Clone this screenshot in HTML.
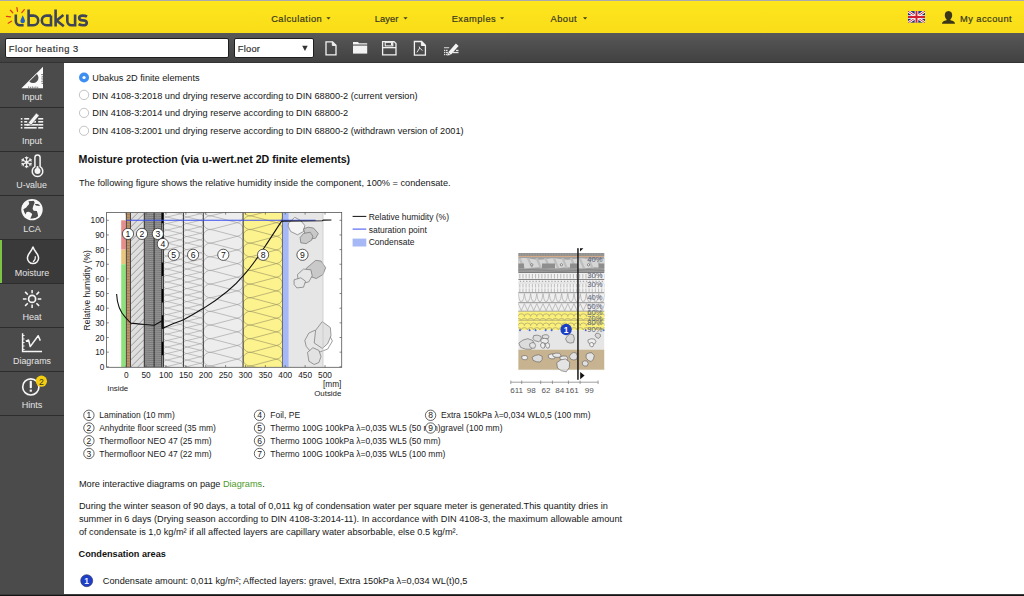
<!DOCTYPE html>
<html><head><meta charset="utf-8">
<style>
html,body{margin:0;padding:0;width:1024px;height:596px;overflow:hidden;background:#fff;font-family:"Liberation Sans",sans-serif;}
.a{position:absolute;}
#top{left:0;top:0;width:1024px;height:1.1px;background:#a8aab0;}
#hdr{left:0;top:1.1px;width:1024px;height:32.1px;background:linear-gradient(#fde61e,#f9dd18);}
#tb{left:0;top:33.2px;width:1024px;height:29px;background:linear-gradient(#585858,#414141);}
#tbline{left:0;top:62px;width:1024px;height:1px;background:#333;}
#side{left:0;top:63px;width:64px;height:533px;background:#4b4b4b;}
#bot{left:0;top:594px;width:1024px;height:2px;background:linear-gradient(#666,#1a1a1a 45%,#111);}
.nav{font-size:10px;color:#3b3a22;line-height:10px;}
.sep{left:0;width:64px;height:1.5px;background:#2d2d2d;}

</style></head>
<body>
<div class="a" id="top"></div>
<div class="a" id="hdr"></div>
<div class="a" id="tb"></div>
<div class="a" id="tbline"></div>
<div class="a" id="side"></div>
<div class="a" id="bot"></div>

<!-- header -->
<svg class="a" style="left:0;top:0" width="100" height="33" viewBox="0 0 100 33">
  <g stroke="#dc3c1a" stroke-width="1.25" stroke-linecap="round">
    <path d="M16.9 7.6 L17.5 11.4"/>
    <path d="M10.4 10.3 L12.8 12.8"/>
    <path d="M24.3 9.6 L21.8 12.6"/>
    <path d="M6.4 16.3 L10.6 16.8"/>
    <path d="M8.2 23.2 L11.4 21.2"/>
  </g>
  <g fill="none" stroke="#3f4557" stroke-width="2.6">
    <path d="M15.8 14.6 V21 A4.2 4.2 0 0 0 20 25.2 H23.6"/>
    <path d="M28.6 9.4 V25.2 H33.4 A4.8 4.8 0 0 0 33.4 15.6 H28.6"/>
    <path d="M51 15.6 V26.5 M51 25.2 H46.6 A4.8 4.8 0 0 1 46.6 15.6 H51"/>
    <path d="M55.6 9.4 V26.5 M63.4 14.9 L56.6 20.5 L63.8 26.3"/>
    <path d="M67.3 14.6 V21 A4.2 4.2 0 0 0 71.5 25.2 H75.1 M75.1 14.6 V26.5"/>
    <path d="M87 16.6 Q85.6 15.6 82.6 15.6 Q79.2 15.6 79.2 18 Q79.2 20.3 82.8 20.4 Q86.8 20.5 86.8 22.9 Q86.8 25.2 83 25.2 Q80.2 25.2 78.6 24.2"/>
  </g>
  <path d="M22.7 15.3 Q21 19 20.5 20.6 Q20.2 23.3 22.6 23.3 Q25.1 23.3 24.9 20.6 Q24.6 19 22.7 15.3Z" fill="#1c5fd0"/>
</svg>

<svg class="a" style="left:0;top:0" width="1024" height="63" viewBox="0 0 1024 63">
  <g font-family="Liberation Sans" font-size="9.3" fill="#3a3920" stroke="#3a3920" stroke-width="0.2" letter-spacing="0.45">
    <text x="271.2" y="21.5">Calculation</text>
    <text x="374.8" y="21.5" letter-spacing="0.1">Layer</text>
    <text x="451.7" y="21.5">Examples</text>
    <text x="550.5" y="21.5">About</text>
    <text x="960" y="21.8">My account</text>
  </g>
  <g fill="#3d3c22">
    <path d="M326.4 17.2h4.2l-2.1 2.4z"/>
    <path d="M403.4 17.2h4.2l-2.1 2.4z"/>
    <path d="M500 17.2h4.2l-2.1 2.4z"/>
    <path d="M583 17.2h4.2l-2.1 2.4z"/>
  </g>
</svg>


<!-- flag & user -->
<svg class="a" style="left:900px;top:5px" width="70" height="25" viewBox="900 5 70 25">
  <defs><clipPath id="flc"><rect x="908" y="11.1" width="17" height="11.7"/></clipPath></defs>
  <g clip-path="url(#flc)">
    <rect x="908" y="11.1" width="17" height="11.7" fill="#22307a"/>
    <path d="M908 11.1 L925 22.8 M925 11.1 L908 22.8" stroke="#fff" stroke-width="2.6"/>
    <path d="M908 11.1 L925 22.8 M925 11.1 L908 22.8" stroke="#d02030" stroke-width="0.9"/>
    <path d="M916.5 11.1 V22.8 M908 16.95 H925" stroke="#fff" stroke-width="3.6"/>
    <path d="M916.5 11.1 V22.8 M908 16.95 H925" stroke="#d02030" stroke-width="2"/>
  </g>
  <path d="M948.5 11 C945.8 11 944.8 13.2 944.8 15.3 C944.8 17.3 945.8 18.8 946.6 19.4 L946.6 20.3 C943.6 20.9 942 21.9 942 23.8 H955 C955 21.9 953.4 20.9 950.4 20.3 L950.4 19.4 C951.2 18.8 952.2 17.3 952.2 15.3 C952.2 13.2 951.2 11 948.5 11Z" fill="#3a3618"/>
</svg>
<!-- toolbar -->
<div class="a" style="left:5px;top:38px;width:224px;height:20px;background:#fff;border:1px solid #1e1e1e;border-radius:2px;box-sizing:border-box;"></div>
<div class="a" style="left:234px;top:38px;width:79.5px;height:20px;background:#fff;border:1px solid #1e1e1e;border-radius:2px;box-sizing:border-box;"></div>
<svg class="a" style="left:0;top:33px" width="480" height="30" viewBox="0 33 480 30">
  <g font-family="Liberation Sans" fill="#333" stroke="#333" stroke-width="0.2">
    <text x="8.8" y="51.9" font-size="9.3" letter-spacing="0.52">Floor heating 3</text>
    <text x="237.7" y="51.8" font-size="9.3" letter-spacing="0.27">Floor</text>
  </g>
  <path d="M302.2 45.7 H307.7 L304.95 51.1Z" fill="#333"/>
  <!-- new doc -->
  <path d="M326 41.8 H332.5 L336 45.3 V54.8 H326Z" fill="none" stroke="#f2f2f2" stroke-width="1.3"/>
  <path d="M332.3 41.8 V45.4 H336" fill="#f2f2f2" stroke="#f2f2f2" stroke-width="1"/>
  <!-- folder -->
  <path d="M353 42 H358 L359 43.2 H367.2 V44.6 H353Z" fill="#f2f2f2"/>
  <rect x="353" y="45.6" width="14.2" height="8" fill="#f2f2f2"/>
  <!-- save -->
  <path d="M382.6 41.6 H394 L396 43.6 V54.9 H382.6Z" fill="none" stroke="#f2f2f2" stroke-width="1.3"/>
  <rect x="385.2" y="42.3" width="7.6" height="3.6" fill="none" stroke="#f2f2f2" stroke-width="1.1"/>
  <rect x="391" y="42.6" width="1.6" height="2.6" fill="#f2f2f2"/>
  <rect x="382.6" y="47" width="13.4" height="1.3" fill="#f2f2f2"/>
  <!-- pdf -->
  <path d="M414.4 41.5 H421.6 L425.4 45.3 V55.2 H414.4Z" fill="none" stroke="#f2f2f2" stroke-width="1.3"/>
  <path d="M421.4 41.5 V45.5 H425.4" fill="#f2f2f2" stroke="#f2f2f2" stroke-width="1"/>
  <path d="M416.9 52.4 L419.7 48 L419.2 46.6 M419.7 48 L422.5 50.6" fill="none" stroke="#f2f2f2" stroke-width="0.9"/>
  <!-- edit -->
  <g fill="#e6e6e6">
    <rect x="444" y="47" width="5.2" height="1.3" fill="#bdbdbd"/>
    <rect x="444" y="49.8" width="1.3" height="1.3"/><rect x="446" y="49.8" width="1.6" height="1.3"/><rect x="456" y="49.8" width="2.5" height="1.3"/>
    <rect x="444" y="51.9" width="1.3" height="1.3"/><rect x="446" y="51.9" width="1.9" height="1.3"/><rect x="452.6" y="51.9" width="5.9" height="1.3"/>
    <rect x="444" y="54" width="1.3" height="1.2"/><rect x="446" y="54" width="0.9" height="1.2"/>
  </g>
  <path d="M448.2 52.3 L455.9 43.6 L458.6 46 L450.9 54.7Z" fill="#f4f4f4"/>
  <path d="M447.9 52.8 L447 55.5 L450.4 55.1Z" fill="#f4f4f4"/>
</svg>

<!-- sidebar -->
<div class="a" style="left:0;top:239.5px;width:64px;height:44px;background:#3a3a3a;"></div>
<div class="a" style="left:0;top:239.5px;width:2px;height:44px;background:#7cc443;"></div>
<div class="a sep" style="top:106.5px"></div>
<div class="a sep" style="top:150.5px"></div>
<div class="a sep" style="top:194.5px"></div>
<div class="a sep" style="top:238.7px"></div>
<div class="a sep" style="top:282.7px"></div>
<div class="a sep" style="top:326.7px"></div>
<div class="a sep" style="top:370.7px"></div>
<div class="a sep" style="top:414.7px"></div>
<svg class="a" style="left:0;top:63px" width="64" height="360" viewBox="0 63 64 360">
  <g font-family="Liberation Sans" font-size="9.1" fill="#e4e4e4" text-anchor="middle">
    <text x="32" y="99.5">Input</text>
    <text x="32" y="143.5">Input</text>
    <text x="31.6" y="187.5" font-size="8.9">U-value</text>
    <text x="32" y="231.5">LCA</text>
    <text x="32" y="275.5" font-size="8.96">Moisture</text>
    <text x="32" y="319.5">Heat</text>
    <text x="32" y="363.5" font-size="8.9">Diagrams</text>
    <text x="32" y="407.5">Hints</text>
  </g>
  <!-- set square -->
  <path d="M21.4 88.2 L43 66.7 V88.2Z" fill="#fafafa"/>
  <path d="M29.3 81.5 A5.35 5.35 0 0 0 36.9 73.9Z" fill="#4f4f4f"/>
  <g stroke="#4f4f4f" stroke-width="0.7">
    <path d="M41.2 74.5 H43 M41.6 76.3 H43 M41.2 78.1 H43 M41.6 79.9 H43 M41.2 81.7 H43 M41.6 83.5 H43"/>
    <path d="M28.7 86.4 V88.2 M30.5 86.8 V88.2 M32.3 86.4 V88.2 M34.1 86.8 V88.2 M35.9 86.4 V88.2 M37.7 86.8 V88.2"/>
  </g>
  <!-- input 2 -->
  <g fill="#f0f0f0">
    <rect x="20.8" y="118" width="1.6" height="1.6"/><rect x="24.2" y="118" width="5" height="1.6"/><rect x="38.2" y="118" width="5" height="1.6"/>
    <rect x="20.8" y="121" width="1.6" height="1.6"/><rect x="24.2" y="121" width="3" height="1.6"/><rect x="31" y="121" width="5" height="1.6"/><rect x="38.2" y="121" width="5" height="1.6"/>
    <rect x="20.8" y="124" width="1.6" height="1.6"/><rect x="24.2" y="124" width="14" height="1.6"/><rect x="38.2" y="124" width="5" height="1.6"/>
    <rect x="20.8" y="127" width="1.6" height="1.6"/><rect x="24.2" y="127" width="12.5" height="1.6"/><rect x="38.2" y="127" width="5" height="1.6"/>
  </g>
  <path d="M28.2 122.8 L36.3 113 L39.2 115.5 L31.1 125.2Z" fill="#f4f4f4" stroke="#4f4f4f" stroke-width="0.6"/>
  <path d="M27.8 123.3 L26.5 125.9 L29.6 125Z" fill="#f4f4f4"/>
  <!-- snowflake -->
  <path d="M26.60 162.20L26.60 156.80M26.60 158.85L28.01 157.44M26.60 158.85L25.19 157.44M26.60 162.20L21.92 159.50M23.70 160.53L23.18 158.59M23.70 160.53L21.77 161.04M26.60 162.20L21.92 164.90M23.70 163.87L21.77 163.36M23.70 163.87L23.18 165.81M26.60 162.20L26.60 167.60M26.60 165.55L25.19 166.96M26.60 165.55L28.01 166.96M26.60 162.20L31.28 164.90M29.50 163.87L30.02 165.81M29.50 163.87L31.43 163.36M26.60 162.20L31.28 159.50M29.50 160.53L31.43 161.04M29.50 160.53L30.02 158.59" stroke="#f0f0f0" stroke-width="1.05" fill="none" stroke-linecap="round"/>
  <circle cx="26.6" cy="162.2" r="1.7" fill="#f0f0f0"/>
  <!-- thermometer -->
  <path d="M34.9 166.6 V157.6 A2.6 2.6 0 0 1 40.1 157.6 V166.6 A5.3 5.3 0 1 1 34.9 166.6Z" fill="none" stroke="#f4f4f4" stroke-width="1.5"/>
  <circle cx="37.5" cy="171" r="3" fill="#f4f4f4"/>
  <path d="M36.5 171 V167 A1 1 0 0 1 38.5 167 V171Z" fill="#f4f4f4"/>
  <!-- globe -->
  <defs><clipPath id="gclip"><circle cx="32" cy="209.6" r="9.35"/></clipPath></defs>
  <circle cx="32" cy="209.6" r="10.7" fill="#f8f8f8"/>
  <g clip-path="url(#gclip)" fill="#4b4b4b">
    <polygon points="28.39,201.20 33.85,200.78 34.69,202.87 33.85,204.55 33.01,206.65 32.59,208.75 33.64,210.85 36.79,211.06 37.62,213.37 38.04,215.88 36.79,217.56 33.43,218.40 30.07,218.82 30.91,217.14 32.17,214.62 31.33,212.95 28.81,211.69 26.71,212.11 25.46,214.62 24.20,212.11 23.36,209.17 25.04,208.33 26.29,207.49 27.34,206.02 28.81,204.55 29.23,203.29"/>
    <polygon points="34.69,203.92 37.62,203.92 39.93,204.97 39.30,206.02 35.95,205.39"/>
  </g>
  <!-- droplet -->
  <path d="M33 246.6 Q33.5 249 36.5 253 Q38.6 256 38.6 258 A5.6 5.6 0 0 1 27.4 258 Q27.4 256 29.5 253 Q32.5 249 33 246.6Z" fill="none" stroke="#f4f4f4" stroke-width="1.5"/>
  <path d="M35.3 256.6 Q35.6 260.2 33.4 261.6" fill="none" stroke="#f4f4f4" stroke-width="1.2" stroke-linecap="round"/>
  <!-- sun -->
  <circle cx="32.1" cy="298.9" r="3.5" fill="none" stroke="#f6f6f6" stroke-width="1.7"/>
  <g stroke="#f6f6f6" stroke-width="1.5">
    <path d="M32.1 289.9 V293.3 M32.1 304.6 V308 M22.9 298.9 H26.5 M37.7 298.9 H41.3"/>
    <path d="M25.1 291.9 L27.8 294.6 M36.4 303.2 L39.1 305.9 M25.1 305.9 L27.8 303.2 M36.4 294.6 L39.1 291.9"/>
  </g>
  <!-- diagrams -->
  <path d="M22.6 333.3 V351.6 H42" fill="none" stroke="#f6f6f6" stroke-width="1.5"/>
  <g stroke="#f6f6f6" stroke-width="0.9"><path d="M22.6 335.5 H24.6 M22.6 339 H24.6 M22.6 342.5 H24.6 M22.6 346 H24.6 M22.6 349.5 H24.6"/></g>
  <path d="M25.8 341.3 L28.6 340 L30.2 346.6 L38.2 335.7 L40.3 340.6" fill="none" stroke="#f6f6f6" stroke-width="1.5" stroke-linejoin="round"/>
  <!-- hints -->
  <circle cx="30.8" cy="386.9" r="8.1" fill="none" stroke="#f6f6f6" stroke-width="1.65"/>
  <rect x="29.7" y="380.8" width="2.2" height="7.4" rx="0.8" fill="#f6f6f6"/>
  <rect x="29.7" y="389.6" width="2.2" height="2.1" fill="#f6f6f6"/>
  <circle cx="41.4" cy="381.2" r="5.6" fill="#f5cf0f"/>
  <text x="41.4" y="384.6" font-family="Liberation Sans" font-size="8.6" fill="#333" text-anchor="middle">2</text>
</svg>

<!-- content texts -->
<svg class="a" style="left:64px;top:63px" width="960" height="531" viewBox="64 63 960 531">
  <!-- radios -->
  <circle cx="84.05" cy="77.5" r="5" fill="#3d8ef2"/>
  <circle cx="84.05" cy="77.5" r="1.6" fill="#fff"/>
  <circle cx="84.05" cy="94.9" r="4.7" fill="#fff" stroke="#b4b4b4" stroke-width="0.8"/>
  <circle cx="84.05" cy="112.9" r="4.6" fill="#fff" stroke="#b4b4b4" stroke-width="0.8"/>
  <circle cx="84.05" cy="130.8" r="4.6" fill="#fff" stroke="#b4b4b4" stroke-width="0.8"/>
  <g font-family="Liberation Sans" font-size="9.2" fill="#161616">
    <text x="92.3" y="80.8">Ubakus 2D finite elements</text>
    <text x="92.3" y="98.5">DIN 4108-3:2018 und drying reserve according to DIN 68800-2 (current version)</text>
    <text x="92.3" y="116.2">DIN 4108-3:2014 und drying reserve according to DIN 68800-2</text>
    <text x="92.3" y="134">DIN 4108-3:2001 und drying reserve according to DIN 68800-2 (withdrawn version of 2001)</text>
    <text x="78.6" y="162.8" font-weight="bold" font-size="10.63" fill="#111">Moisture protection (via u-wert.net 2D finite elements)</text>
    <text x="79" y="185.9">The following figure shows the relative humidity inside the component, 100% = condensate.</text>
    <text x="78.9" y="487.3">More interactive diagrams on page <tspan fill="#4c9a2a">Diagrams</tspan>.</text>
    <text x="78.9" y="509.3">During the winter season of 90 days, a total of 0,011 kg of condensation water per square meter is generated.This quantity dries in</text>
    <text x="78.9" y="522">summer in 6 days (Drying season according to DIN 4108-3:2014-11). In accordance with DIN 4108-3, the maximum allowable amount</text>
    <text x="78.9" y="534.7">of condensate is 1,0 kg/m² if all affected layers are capillary water absorbable, else 0.5 kg/m².</text>
    <text x="78.6" y="556.5" font-weight="bold" font-size="9.15" fill="#111">Condensation areas</text>
    <text x="102.8" y="583.6">Condensate amount: 0,011 kg/m²; Affected layers: gravel, Extra 150kPa λ=0,034 WL(t)0,5</text>
  </g>
  <circle cx="86.7" cy="580.7" r="6" fill="#1e3ec8" stroke="#2a2a50" stroke-width="0.6"/>
  <text x="86.7" y="583.8" font-family="Liberation Sans" font-size="8.5" font-weight="bold" fill="#e8ecff" text-anchor="middle">1</text>

  <!-- legend list -->
  <g fill="#fff" stroke="#333" stroke-width="0.75">
    <circle cx="88.9" cy="415.3" r="5.2"/><circle cx="88.9" cy="428" r="5.2"/><circle cx="88.9" cy="440.8" r="5.2"/><circle cx="88.9" cy="453.5" r="5.2"/>
    <circle cx="259.5" cy="415.3" r="5.2"/><circle cx="259.5" cy="428" r="5.2"/><circle cx="259.5" cy="440.8" r="5.2"/><circle cx="259.5" cy="453.5" r="5.2"/>
  </g>
  <g font-family="Liberation Sans" font-size="8.5" fill="#222">
    <g text-anchor="middle">
      <text x="88.9" y="418.3">1</text><text x="88.9" y="431">2</text><text x="88.9" y="443.8">2</text><text x="88.9" y="456.5">3</text>
      <text x="259.5" y="418.3">4</text><text x="259.5" y="431">5</text><text x="259.5" y="443.8">6</text><text x="259.5" y="456.5">7</text>
    </g>
    <text x="99.2" y="418.3">Lamination (10 mm)</text>
    <text x="99.2" y="431">Anhydrite floor screed (35 mm)</text>
    <text x="99.2" y="443.8">Thermofloor NEO 47 (25 mm)</text>
    <text x="99.2" y="456.5">Thermofloor NEO 47 (22 mm)</text>
    <text x="270.3" y="418.3">Foil, PE</text>
    <text x="270.3" y="431">Thermo 100G 100kPa λ=0,035 WL5 (50 mm)</text>
    <text x="270.3" y="443.8">Thermo 100G 100kPa λ=0,035 WL5 (50 mm)</text>
    <text x="270.3" y="456.5">Thermo 100G 100kPa λ=0,035 WL5 (100 mm)</text>
  </g>
  <g fill="#fff" stroke="#333" stroke-width="0.75">
    <circle cx="430.6" cy="415.3" r="5.2"/><circle cx="430.6" cy="428" r="5.2"/>
  </g>
  <g font-family="Liberation Sans" font-size="8.5" fill="#222">
    <text x="430.6" y="418.3" text-anchor="middle">8</text><text x="430.6" y="431" text-anchor="middle">9</text>
    <text x="441" y="418.3">Extra 150kPa λ=0,034 WL0,5 (100 mm)</text>
    <text x="440.6" y="431">gravel (100 mm)</text>
  </g>
</svg>
<!-- CHART -->
<svg class="a" style="left:70px;top:200px" width="420" height="205" viewBox="70 200 420 205">
<defs><clipPath id="cp"><rect x="106.6" y="212.4" width="235.1" height="154.9"/></clipPath></defs>
<g clip-path="url(#cp)">
<rect x="121.2" y="220.3" width="4.6" height="29.3" fill="#e88c8c"/>
<rect x="121.2" y="249.6" width="4.6" height="14.65" fill="#e9c67e"/>
<rect x="121.2" y="264.25" width="4.6" height="103.05" fill="#8ee27c"/>
<rect x="126.3" y="212.4" width="4.1" height="154.9" fill="#d8a877"/>
<path d="M126.9 212.9H129.8M126.9 214.45H129.8M126.9 216H129.8M126.9 217.55H129.8M126.9 219.1H129.8M126.9 220.65H129.8M126.9 222.2H129.8M126.9 223.75H129.8M126.9 225.3H129.8M126.9 226.85H129.8M126.9 228.4H129.8M126.9 229.95H129.8M126.9 231.5H129.8M126.9 233.05H129.8M126.9 234.6H129.8M126.9 236.15H129.8M126.9 237.7H129.8M126.9 239.25H129.8M126.9 240.8H129.8M126.9 242.35H129.8M126.9 243.9H129.8M126.9 245.45H129.8M126.9 247H129.8M126.9 248.55H129.8M126.9 250.1H129.8M126.9 251.65H129.8M126.9 253.2H129.8M126.9 254.75H129.8M126.9 256.3H129.8M126.9 257.85H129.8M126.9 259.4H129.8M126.9 260.95H129.8M126.9 262.5H129.8M126.9 264.05H129.8M126.9 265.6H129.8M126.9 267.15H129.8M126.9 268.7H129.8M126.9 270.25H129.8M126.9 271.8H129.8M126.9 273.35H129.8M126.9 274.9H129.8M126.9 276.45H129.8M126.9 278H129.8M126.9 279.55H129.8M126.9 281.1H129.8M126.9 282.65H129.8M126.9 284.2H129.8M126.9 285.75H129.8M126.9 287.3H129.8M126.9 288.85H129.8M126.9 290.4H129.8M126.9 291.95H129.8M126.9 293.5H129.8M126.9 295.05H129.8M126.9 296.6H129.8M126.9 298.15H129.8M126.9 299.7H129.8M126.9 301.25H129.8M126.9 302.8H129.8M126.9 304.35H129.8M126.9 305.9H129.8M126.9 307.45H129.8M126.9 309H129.8M126.9 310.55H129.8M126.9 312.1H129.8M126.9 313.65H129.8M126.9 315.2H129.8M126.9 316.75H129.8M126.9 318.3H129.8M126.9 319.85H129.8M126.9 321.4H129.8M126.9 322.95H129.8M126.9 324.5H129.8M126.9 326.05H129.8M126.9 327.6H129.8M126.9 329.15H129.8M126.9 330.7H129.8M126.9 332.25H129.8M126.9 333.8H129.8M126.9 335.35H129.8M126.9 336.9H129.8M126.9 338.45H129.8M126.9 340H129.8M126.9 341.55H129.8M126.9 343.1H129.8M126.9 344.65H129.8M126.9 346.2H129.8M126.9 347.75H129.8M126.9 349.3H129.8M126.9 350.85H129.8M126.9 352.4H129.8M126.9 353.95H129.8M126.9 355.5H129.8M126.9 357.05H129.8M126.9 358.6H129.8M126.9 360.15H129.8M126.9 361.7H129.8M126.9 363.25H129.8M126.9 364.8H129.8M126.9 366.35H129.8" stroke="#6e5236" stroke-width="0.5"/>
<rect x="130.4" y="212.4" width="13.9" height="154.9" fill="#dedede"/>
<g clip-path="url(#c2)"><path d="M130.4 206.3L144.3 192.4M130.4 213.3L144.3 199.4M130.4 220.3L144.3 206.4M130.4 227.3L144.3 213.4M130.4 234.3L144.3 220.4M130.4 241.3L144.3 227.4M130.4 248.3L144.3 234.4M130.4 255.3L144.3 241.4M130.4 262.3L144.3 248.4M130.4 269.3L144.3 255.4M130.4 276.3L144.3 262.4M130.4 283.3L144.3 269.4M130.4 290.3L144.3 276.4M130.4 297.3L144.3 283.4M130.4 304.3L144.3 290.4M130.4 311.3L144.3 297.4M130.4 318.3L144.3 304.4M130.4 325.3L144.3 311.4M130.4 332.3L144.3 318.4M130.4 339.3L144.3 325.4M130.4 346.3L144.3 332.4M130.4 353.3L144.3 339.4M130.4 360.3L144.3 346.4M130.4 367.3L144.3 353.4M130.4 374.3L144.3 360.4M130.4 381.3L144.3 367.4M130.4 388.3L144.3 374.4M130.4 395.3L144.3 381.4" stroke="#7c7c7c" stroke-width="0.7"/></g>
<clipPath id="c2"><rect x="130.4" y="212.4" width="13.9" height="154.9"/></clipPath>
<rect x="144.3" y="212.4" width="19.1" height="154.9" fill="#7c7c7c"/>
<path d="M144.3 213.4Q146.8 212.9 149.3 213.4T154.3 213.4T159.3 213.4T164.3 213.4M144.3 215.4Q146.8 214.9 149.3 215.4T154.3 215.4T159.3 215.4T164.3 215.4M144.3 217.4Q146.8 216.9 149.3 217.4T154.3 217.4T159.3 217.4T164.3 217.4M144.3 219.4Q146.8 218.9 149.3 219.4T154.3 219.4T159.3 219.4T164.3 219.4M144.3 221.4Q146.8 220.9 149.3 221.4T154.3 221.4T159.3 221.4T164.3 221.4M144.3 223.4Q146.8 222.9 149.3 223.4T154.3 223.4T159.3 223.4T164.3 223.4M144.3 225.4Q146.8 224.9 149.3 225.4T154.3 225.4T159.3 225.4T164.3 225.4M144.3 227.4Q146.8 226.9 149.3 227.4T154.3 227.4T159.3 227.4T164.3 227.4M144.3 229.4Q146.8 228.9 149.3 229.4T154.3 229.4T159.3 229.4T164.3 229.4M144.3 231.4Q146.8 230.9 149.3 231.4T154.3 231.4T159.3 231.4T164.3 231.4M144.3 233.4Q146.8 232.9 149.3 233.4T154.3 233.4T159.3 233.4T164.3 233.4M144.3 235.4Q146.8 234.9 149.3 235.4T154.3 235.4T159.3 235.4T164.3 235.4M144.3 237.4Q146.8 236.9 149.3 237.4T154.3 237.4T159.3 237.4T164.3 237.4M144.3 239.4Q146.8 238.9 149.3 239.4T154.3 239.4T159.3 239.4T164.3 239.4M144.3 241.4Q146.8 240.9 149.3 241.4T154.3 241.4T159.3 241.4T164.3 241.4M144.3 243.4Q146.8 242.9 149.3 243.4T154.3 243.4T159.3 243.4T164.3 243.4M144.3 245.4Q146.8 244.9 149.3 245.4T154.3 245.4T159.3 245.4T164.3 245.4M144.3 247.4Q146.8 246.9 149.3 247.4T154.3 247.4T159.3 247.4T164.3 247.4M144.3 249.4Q146.8 248.9 149.3 249.4T154.3 249.4T159.3 249.4T164.3 249.4M144.3 251.4Q146.8 250.9 149.3 251.4T154.3 251.4T159.3 251.4T164.3 251.4M144.3 253.4Q146.8 252.9 149.3 253.4T154.3 253.4T159.3 253.4T164.3 253.4M144.3 255.4Q146.8 254.9 149.3 255.4T154.3 255.4T159.3 255.4T164.3 255.4M144.3 257.4Q146.8 256.9 149.3 257.4T154.3 257.4T159.3 257.4T164.3 257.4M144.3 259.4Q146.8 258.9 149.3 259.4T154.3 259.4T159.3 259.4T164.3 259.4M144.3 261.4Q146.8 260.9 149.3 261.4T154.3 261.4T159.3 261.4T164.3 261.4M144.3 263.4Q146.8 262.9 149.3 263.4T154.3 263.4T159.3 263.4T164.3 263.4M144.3 265.4Q146.8 264.9 149.3 265.4T154.3 265.4T159.3 265.4T164.3 265.4M144.3 267.4Q146.8 266.9 149.3 267.4T154.3 267.4T159.3 267.4T164.3 267.4M144.3 269.4Q146.8 268.9 149.3 269.4T154.3 269.4T159.3 269.4T164.3 269.4M144.3 271.4Q146.8 270.9 149.3 271.4T154.3 271.4T159.3 271.4T164.3 271.4M144.3 273.4Q146.8 272.9 149.3 273.4T154.3 273.4T159.3 273.4T164.3 273.4M144.3 275.4Q146.8 274.9 149.3 275.4T154.3 275.4T159.3 275.4T164.3 275.4M144.3 277.4Q146.8 276.9 149.3 277.4T154.3 277.4T159.3 277.4T164.3 277.4M144.3 279.4Q146.8 278.9 149.3 279.4T154.3 279.4T159.3 279.4T164.3 279.4M144.3 281.4Q146.8 280.9 149.3 281.4T154.3 281.4T159.3 281.4T164.3 281.4M144.3 283.4Q146.8 282.9 149.3 283.4T154.3 283.4T159.3 283.4T164.3 283.4M144.3 285.4Q146.8 284.9 149.3 285.4T154.3 285.4T159.3 285.4T164.3 285.4M144.3 287.4Q146.8 286.9 149.3 287.4T154.3 287.4T159.3 287.4T164.3 287.4M144.3 289.4Q146.8 288.9 149.3 289.4T154.3 289.4T159.3 289.4T164.3 289.4M144.3 291.4Q146.8 290.9 149.3 291.4T154.3 291.4T159.3 291.4T164.3 291.4M144.3 293.4Q146.8 292.9 149.3 293.4T154.3 293.4T159.3 293.4T164.3 293.4M144.3 295.4Q146.8 294.9 149.3 295.4T154.3 295.4T159.3 295.4T164.3 295.4M144.3 297.4Q146.8 296.9 149.3 297.4T154.3 297.4T159.3 297.4T164.3 297.4M144.3 299.4Q146.8 298.9 149.3 299.4T154.3 299.4T159.3 299.4T164.3 299.4M144.3 301.4Q146.8 300.9 149.3 301.4T154.3 301.4T159.3 301.4T164.3 301.4M144.3 303.4Q146.8 302.9 149.3 303.4T154.3 303.4T159.3 303.4T164.3 303.4M144.3 305.4Q146.8 304.9 149.3 305.4T154.3 305.4T159.3 305.4T164.3 305.4M144.3 307.4Q146.8 306.9 149.3 307.4T154.3 307.4T159.3 307.4T164.3 307.4M144.3 309.4Q146.8 308.9 149.3 309.4T154.3 309.4T159.3 309.4T164.3 309.4M144.3 311.4Q146.8 310.9 149.3 311.4T154.3 311.4T159.3 311.4T164.3 311.4M144.3 313.4Q146.8 312.9 149.3 313.4T154.3 313.4T159.3 313.4T164.3 313.4M144.3 315.4Q146.8 314.9 149.3 315.4T154.3 315.4T159.3 315.4T164.3 315.4M144.3 317.4Q146.8 316.9 149.3 317.4T154.3 317.4T159.3 317.4T164.3 317.4M144.3 319.4Q146.8 318.9 149.3 319.4T154.3 319.4T159.3 319.4T164.3 319.4M144.3 321.4Q146.8 320.9 149.3 321.4T154.3 321.4T159.3 321.4T164.3 321.4M144.3 323.4Q146.8 322.9 149.3 323.4T154.3 323.4T159.3 323.4T164.3 323.4M144.3 325.4Q146.8 324.9 149.3 325.4T154.3 325.4T159.3 325.4T164.3 325.4M144.3 327.4Q146.8 326.9 149.3 327.4T154.3 327.4T159.3 327.4T164.3 327.4M144.3 329.4Q146.8 328.9 149.3 329.4T154.3 329.4T159.3 329.4T164.3 329.4M144.3 331.4Q146.8 330.9 149.3 331.4T154.3 331.4T159.3 331.4T164.3 331.4M144.3 333.4Q146.8 332.9 149.3 333.4T154.3 333.4T159.3 333.4T164.3 333.4M144.3 335.4Q146.8 334.9 149.3 335.4T154.3 335.4T159.3 335.4T164.3 335.4M144.3 337.4Q146.8 336.9 149.3 337.4T154.3 337.4T159.3 337.4T164.3 337.4M144.3 339.4Q146.8 338.9 149.3 339.4T154.3 339.4T159.3 339.4T164.3 339.4M144.3 341.4Q146.8 340.9 149.3 341.4T154.3 341.4T159.3 341.4T164.3 341.4M144.3 343.4Q146.8 342.9 149.3 343.4T154.3 343.4T159.3 343.4T164.3 343.4M144.3 345.4Q146.8 344.9 149.3 345.4T154.3 345.4T159.3 345.4T164.3 345.4M144.3 347.4Q146.8 346.9 149.3 347.4T154.3 347.4T159.3 347.4T164.3 347.4M144.3 349.4Q146.8 348.9 149.3 349.4T154.3 349.4T159.3 349.4T164.3 349.4M144.3 351.4Q146.8 350.9 149.3 351.4T154.3 351.4T159.3 351.4T164.3 351.4M144.3 353.4Q146.8 352.9 149.3 353.4T154.3 353.4T159.3 353.4T164.3 353.4M144.3 355.4Q146.8 354.9 149.3 355.4T154.3 355.4T159.3 355.4T164.3 355.4M144.3 357.4Q146.8 356.9 149.3 357.4T154.3 357.4T159.3 357.4T164.3 357.4M144.3 359.4Q146.8 358.9 149.3 359.4T154.3 359.4T159.3 359.4T164.3 359.4M144.3 361.4Q146.8 360.9 149.3 361.4T154.3 361.4T159.3 361.4T164.3 361.4M144.3 363.4Q146.8 362.9 149.3 363.4T154.3 363.4T159.3 363.4T164.3 363.4M144.3 365.4Q146.8 364.9 149.3 365.4T154.3 365.4T159.3 365.4T164.3 365.4" stroke="#a0a0a0" stroke-width="0.75" fill="none"/>
<rect x="161.5" y="212.4" width="2" height="154.9" fill="#8c8c8c"/>
<rect x="163.4" y="212.4" width="20" height="154.9" fill="#ededed"/>
<path d="M167.41 197.64L180.91 200.89A3.25 3.25 0 0 1 180.91 207.21L167.41 210.46A3.25 3.25 0 1 1 167.41 204.14L180.91 207.39A3.25 3.25 0 0 1 180.91 213.71L167.41 216.96A3.25 3.25 0 1 1 167.41 210.64L180.91 213.89A3.25 3.25 0 0 1 180.91 220.21L167.41 223.46A3.25 3.25 0 1 1 167.41 217.14L180.91 220.39A3.25 3.25 0 0 1 180.91 226.71L167.41 229.96A3.25 3.25 0 1 1 167.41 223.64L180.91 226.89A3.25 3.25 0 0 1 180.91 233.21L167.41 236.46A3.25 3.25 0 1 1 167.41 230.14L180.91 233.39A3.25 3.25 0 0 1 180.91 239.71L167.41 242.96A3.25 3.25 0 1 1 167.41 236.64L180.91 239.89A3.25 3.25 0 0 1 180.91 246.21L167.41 249.46A3.25 3.25 0 1 1 167.41 243.14L180.91 246.39A3.25 3.25 0 0 1 180.91 252.71L167.41 255.96A3.25 3.25 0 1 1 167.41 249.64L180.91 252.89A3.25 3.25 0 0 1 180.91 259.21L167.41 262.46A3.25 3.25 0 1 1 167.41 256.14L180.91 259.39A3.25 3.25 0 0 1 180.91 265.71L167.41 268.96A3.25 3.25 0 1 1 167.41 262.64L180.91 265.89A3.25 3.25 0 0 1 180.91 272.21L167.41 275.46A3.25 3.25 0 1 1 167.41 269.14L180.91 272.39A3.25 3.25 0 0 1 180.91 278.71L167.41 281.96A3.25 3.25 0 1 1 167.41 275.64L180.91 278.89A3.25 3.25 0 0 1 180.91 285.21L167.41 288.46A3.25 3.25 0 1 1 167.41 282.14L180.91 285.39A3.25 3.25 0 0 1 180.91 291.71L167.41 294.96A3.25 3.25 0 1 1 167.41 288.64L180.91 291.89A3.25 3.25 0 0 1 180.91 298.21L167.41 301.46A3.25 3.25 0 1 1 167.41 295.14L180.91 298.39A3.25 3.25 0 0 1 180.91 304.71L167.41 307.96A3.25 3.25 0 1 1 167.41 301.64L180.91 304.89A3.25 3.25 0 0 1 180.91 311.21L167.41 314.46A3.25 3.25 0 1 1 167.41 308.14L180.91 311.39A3.25 3.25 0 0 1 180.91 317.71L167.41 320.96A3.25 3.25 0 1 1 167.41 314.64L180.91 317.89A3.25 3.25 0 0 1 180.91 324.21L167.41 327.46A3.25 3.25 0 1 1 167.41 321.14L180.91 324.39A3.25 3.25 0 0 1 180.91 330.71L167.41 333.96A3.25 3.25 0 1 1 167.41 327.64L180.91 330.89A3.25 3.25 0 0 1 180.91 337.21L167.41 340.46A3.25 3.25 0 1 1 167.41 334.14L180.91 337.39A3.25 3.25 0 0 1 180.91 343.71L167.41 346.96A3.25 3.25 0 1 1 167.41 340.64L180.91 343.89A3.25 3.25 0 0 1 180.91 350.21L167.41 353.46A3.25 3.25 0 1 1 167.41 347.14L180.91 350.39A3.25 3.25 0 0 1 180.91 356.71L167.41 359.96A3.25 3.25 0 1 1 167.41 353.64L180.91 356.89A3.25 3.25 0 0 1 180.91 363.21L167.41 366.46A3.25 3.25 0 1 1 167.41 360.14L180.91 363.39A3.25 3.25 0 0 1 180.91 369.71L167.41 372.96A3.25 3.25 0 1 1 167.41 366.64L180.91 369.89A3.25 3.25 0 0 1 180.91 376.21L167.41 379.46A3.25 3.25 0 1 1 167.41 373.14" fill="none" stroke="#a0a0a0" stroke-width="0.6"/>
<rect x="183.4" y="212.4" width="19.9" height="154.9" fill="#ededed"/>
<path d="M187.42 197.64L200.82 200.89A3.25 3.25 0 0 1 200.82 207.21L187.42 210.46A3.25 3.25 0 1 1 187.42 204.14L200.82 207.39A3.25 3.25 0 0 1 200.82 213.71L187.42 216.96A3.25 3.25 0 1 1 187.42 210.64L200.82 213.89A3.25 3.25 0 0 1 200.82 220.21L187.42 223.46A3.25 3.25 0 1 1 187.42 217.14L200.82 220.39A3.25 3.25 0 0 1 200.82 226.71L187.42 229.96A3.25 3.25 0 1 1 187.42 223.64L200.82 226.89A3.25 3.25 0 0 1 200.82 233.21L187.42 236.46A3.25 3.25 0 1 1 187.42 230.14L200.82 233.39A3.25 3.25 0 0 1 200.82 239.71L187.42 242.96A3.25 3.25 0 1 1 187.42 236.64L200.82 239.89A3.25 3.25 0 0 1 200.82 246.21L187.42 249.46A3.25 3.25 0 1 1 187.42 243.14L200.82 246.39A3.25 3.25 0 0 1 200.82 252.71L187.42 255.96A3.25 3.25 0 1 1 187.42 249.64L200.82 252.89A3.25 3.25 0 0 1 200.82 259.21L187.42 262.46A3.25 3.25 0 1 1 187.42 256.14L200.82 259.39A3.25 3.25 0 0 1 200.82 265.71L187.42 268.96A3.25 3.25 0 1 1 187.42 262.64L200.82 265.89A3.25 3.25 0 0 1 200.82 272.21L187.42 275.46A3.25 3.25 0 1 1 187.42 269.14L200.82 272.39A3.25 3.25 0 0 1 200.82 278.71L187.42 281.96A3.25 3.25 0 1 1 187.42 275.64L200.82 278.89A3.25 3.25 0 0 1 200.82 285.21L187.42 288.46A3.25 3.25 0 1 1 187.42 282.14L200.82 285.39A3.25 3.25 0 0 1 200.82 291.71L187.42 294.96A3.25 3.25 0 1 1 187.42 288.64L200.82 291.89A3.25 3.25 0 0 1 200.82 298.21L187.42 301.46A3.25 3.25 0 1 1 187.42 295.14L200.82 298.39A3.25 3.25 0 0 1 200.82 304.71L187.42 307.96A3.25 3.25 0 1 1 187.42 301.64L200.82 304.89A3.25 3.25 0 0 1 200.82 311.21L187.42 314.46A3.25 3.25 0 1 1 187.42 308.14L200.82 311.39A3.25 3.25 0 0 1 200.82 317.71L187.42 320.96A3.25 3.25 0 1 1 187.42 314.64L200.82 317.89A3.25 3.25 0 0 1 200.82 324.21L187.42 327.46A3.25 3.25 0 1 1 187.42 321.14L200.82 324.39A3.25 3.25 0 0 1 200.82 330.71L187.42 333.96A3.25 3.25 0 1 1 187.42 327.64L200.82 330.89A3.25 3.25 0 0 1 200.82 337.21L187.42 340.46A3.25 3.25 0 1 1 187.42 334.14L200.82 337.39A3.25 3.25 0 0 1 200.82 343.71L187.42 346.96A3.25 3.25 0 1 1 187.42 340.64L200.82 343.89A3.25 3.25 0 0 1 200.82 350.21L187.42 353.46A3.25 3.25 0 1 1 187.42 347.14L200.82 350.39A3.25 3.25 0 0 1 200.82 356.71L187.42 359.96A3.25 3.25 0 1 1 187.42 353.64L200.82 356.89A3.25 3.25 0 0 1 200.82 363.21L187.42 366.46A3.25 3.25 0 1 1 187.42 360.14L200.82 363.39A3.25 3.25 0 0 1 200.82 369.71L187.42 372.96A3.25 3.25 0 1 1 187.42 366.64L200.82 369.89A3.25 3.25 0 0 1 200.82 376.21L187.42 379.46A3.25 3.25 0 1 1 187.42 373.14" fill="none" stroke="#a0a0a0" stroke-width="0.6"/>
<rect x="203.3" y="212.4" width="39.8" height="154.9" fill="#ededed"/>
<path d="M211.85 188.75L238 195.57A6.83 6.83 0 0 1 238 208.78L211.85 215.6A6.83 6.83 0 1 1 211.85 202.4L238 209.22A6.83 6.83 0 0 1 238 222.43L211.85 229.25A6.83 6.83 0 1 1 211.85 216.05L238 222.87A6.83 6.83 0 0 1 238 236.08L211.85 242.9A6.83 6.83 0 1 1 211.85 229.7L238 236.52A6.83 6.83 0 0 1 238 249.73L211.85 256.55A6.83 6.83 0 1 1 211.85 243.35L238 250.17A6.83 6.83 0 0 1 238 263.38L211.85 270.2A6.83 6.83 0 1 1 211.85 257L238 263.82A6.83 6.83 0 0 1 238 277.03L211.85 283.85A6.83 6.83 0 1 1 211.85 270.65L238 277.47A6.83 6.83 0 0 1 238 290.68L211.85 297.5A6.83 6.83 0 1 1 211.85 284.3L238 291.12A6.83 6.83 0 0 1 238 304.33L211.85 311.15A6.83 6.83 0 1 1 211.85 297.95L238 304.77A6.83 6.83 0 0 1 238 317.98L211.85 324.8A6.83 6.83 0 1 1 211.85 311.6L238 318.42A6.83 6.83 0 0 1 238 331.63L211.85 338.45A6.83 6.83 0 1 1 211.85 325.25L238 332.07A6.83 6.83 0 0 1 238 345.28L211.85 352.1A6.83 6.83 0 1 1 211.85 338.9L238 345.72A6.83 6.83 0 0 1 238 358.93L211.85 365.75A6.83 6.83 0 1 1 211.85 352.55L238 359.37A6.83 6.83 0 0 1 238 372.58L211.85 379.4A6.83 6.83 0 1 1 211.85 366.2L238 373.02A6.83 6.83 0 0 1 238 386.23L211.85 393.05A6.83 6.83 0 1 1 211.85 379.85" fill="none" stroke="#9a9a9a" stroke-width="0.6"/>
<rect x="243.1" y="212.4" width="39.3" height="154.9" fill="#fdf38e"/>
<path d="M251.68 188.75L277.33 195.58A6.83 6.83 0 0 1 277.33 208.77L251.68 215.6A6.83 6.83 0 1 1 251.68 202.4L277.33 209.23A6.83 6.83 0 0 1 277.33 222.42L251.68 229.25A6.83 6.83 0 1 1 251.68 216.05L277.33 222.88A6.83 6.83 0 0 1 277.33 236.07L251.68 242.9A6.83 6.83 0 1 1 251.68 229.7L277.33 236.53A6.83 6.83 0 0 1 277.33 249.72L251.68 256.55A6.83 6.83 0 1 1 251.68 243.35L277.33 250.18A6.83 6.83 0 0 1 277.33 263.37L251.68 270.2A6.83 6.83 0 1 1 251.68 257L277.33 263.83A6.83 6.83 0 0 1 277.33 277.02L251.68 283.85A6.83 6.83 0 1 1 251.68 270.65L277.33 277.48A6.83 6.83 0 0 1 277.33 290.67L251.68 297.5A6.83 6.83 0 1 1 251.68 284.3L277.33 291.13A6.83 6.83 0 0 1 277.33 304.32L251.68 311.15A6.83 6.83 0 1 1 251.68 297.95L277.33 304.78A6.83 6.83 0 0 1 277.33 317.97L251.68 324.8A6.83 6.83 0 1 1 251.68 311.6L277.33 318.43A6.83 6.83 0 0 1 277.33 331.62L251.68 338.45A6.83 6.83 0 1 1 251.68 325.25L277.33 332.08A6.83 6.83 0 0 1 277.33 345.27L251.68 352.1A6.83 6.83 0 1 1 251.68 338.9L277.33 345.73A6.83 6.83 0 0 1 277.33 358.92L251.68 365.75A6.83 6.83 0 1 1 251.68 352.55L277.33 359.38A6.83 6.83 0 0 1 277.33 372.57L251.68 379.4A6.83 6.83 0 1 1 251.68 366.2L277.33 373.03A6.83 6.83 0 0 1 277.33 386.22L251.68 393.05A6.83 6.83 0 1 1 251.68 379.85" fill="none" stroke="#948f62" stroke-width="0.6"/>
<rect x="288.7" y="212.4" width="34.3" height="154.9" fill="#e6e6e6"/>
<rect x="282.4" y="212.4" width="6.3" height="154.9" fill="#a6b9f6"/>
<polygon points="288.7,222.8 294.8,217.4 300.1,220.1 304.8,225.4 303.5,231.5 297.5,234.8 290.7,231.5 288.1,226.1" fill="#f4f4f4" stroke="#6a6a6a" stroke-width="0.65"/>
<polygon points="303.5,228.8 308.2,227.2 313.6,228.1 318.3,233.5 315.6,238.2 310.9,238.9 305.5,235.5" fill="#c9c9c9" stroke="#6a6a6a" stroke-width="0.65"/>
<polygon points="300.1,237.5 303.5,233.5 310.2,232.2 312.9,236.2 311.6,240.2 306.2,243.6 300.8,242.9" fill="#c9c9c9" stroke="#6a6a6a" stroke-width="0.65"/>
<polygon points="306.2,268.4 315.6,260.4 321,261 325.7,267.7 323,274.5 316.3,278.5 310.2,276.5" fill="#c9c9c9" stroke="#6a6a6a" stroke-width="0.65"/>
<polygon points="297.5,274.5 303.5,269.1 310.9,269.8 312.2,275.8 308.9,281.8 303.5,283.2 298.1,280.5" fill="#e6e6e6" stroke="#6a6a6a" stroke-width="0.65"/>
<polygon points="294.1,279.8 300.8,277.8 305.5,281.2 303.5,287.2 296.8,287.9 294.1,284.5" fill="#e6e6e6" stroke="#6a6a6a" stroke-width="0.65"/>
<polygon points="304.8,340.4 308.9,333 314.9,330.3 329,334.3 332.4,341 327.7,349.1 320.3,351.8 309.5,350.4 306.2,346.4" fill="none" stroke="#6a6a6a" stroke-width="0.65"/>
<polygon points="315.6,330.3 322.3,321.6 330.4,327.6 331,335.7 327.7,343.7 322.3,348.4 314.2,343" fill="#e2e2e2" stroke="#6a6a6a" stroke-width="0.65"/>
<polygon points="307.5,352.4 312.9,347.7 318.9,350.4 321,356.5 318.9,362.5 314.2,364.5 308.9,361.2" fill="#e2e2e2" stroke="#6a6a6a" stroke-width="0.65"/>
<rect x="125.85" y="212.4" width="0.9" height="154.9" fill="#2f2f2f"/>
<rect x="129.95" y="212.4" width="0.9" height="154.9" fill="#2f2f2f"/>
<rect x="143.8" y="212.4" width="1.0" height="154.9" fill="#2f2f2f"/>
<rect x="153.6" y="212.4" width="1.0" height="154.9" fill="#2f2f2f"/>
<rect x="161.15" y="212.4" width="0.7" height="154.9" fill="#2f2f2f"/>
<rect x="163.05" y="212.4" width="0.9" height="154.9" fill="#2f2f2f"/>
<rect x="182.95" y="212.4" width="0.9" height="154.9" fill="#2f2f2f"/>
<rect x="202.85" y="212.4" width="0.9" height="154.9" fill="#2f2f2f"/>
<rect x="242.65" y="212.4" width="0.9" height="154.9" fill="#2f2f2f"/>
<rect x="282.1" y="212.4" width="0.6" height="154.9" fill="#2f2f2f"/>
<rect x="322.6" y="212.4" width="0.8" height="154.9" fill="#c8c8c8"/>
<path d="M162.5 183.3V196.8M162.5 209.7V223.2M162.5 236.1V249.6M162.5 262.5V276M162.5 288.9V302.4M162.5 315.3V328.8M162.5 341.7V355.2" stroke="#000" stroke-width="1.6"/>
<path d="M126.3 220.3H315.6" stroke="#3a4df0" stroke-width="1.1"/>
<path d="M116.6 294.1 C117 303 119 311 125.6 317.7 L130.7 323.1 C137 324 148 324.6 154.3 325.3 L162.3 320.7 L162.8 328.3 C170 324.6 178 322 183.5 319.7 C192 315 197 312 203.1 308.6 C220 298 234 287 244 274.8 C252 266 258 257 264.5 247.2 C272 236 277 228 281.6 221.1 L322.3 220.8 L323.5 220.1 L331.4 220" fill="none" stroke="#111" stroke-width="1.1"/>
</g>
<g fill="#fff" stroke="#333" stroke-width="0.8">
<circle cx="128" cy="233.9" r="5.6"/>
<circle cx="142" cy="233.9" r="5.6"/>
<circle cx="157.8" cy="233.9" r="5.6"/>
<circle cx="162.8" cy="244" r="5.6"/>
<circle cx="173.75" cy="254.8" r="5.6"/>
<circle cx="193.1" cy="254.8" r="5.6"/>
<circle cx="223.3" cy="254.8" r="5.6"/>
<circle cx="263.1" cy="254.8" r="5.6"/>
<circle cx="302.5" cy="254.8" r="5.6"/>
</g>
<g font-family="Liberation Sans" font-size="8.6" fill="#111" text-anchor="middle">
<text x="128" y="236.9">1</text>
<text x="142" y="236.9">2</text>
<text x="157.8" y="236.9">3</text>
<text x="162.8" y="247">4</text>
<text x="173.75" y="257.8">5</text>
<text x="193.1" y="257.8">6</text>
<text x="223.3" y="257.8">7</text>
<text x="263.1" y="257.8">8</text>
<text x="302.5" y="257.8">9</text>
</g>
<rect x="106.6" y="212.4" width="235.1" height="154.9" fill="none" stroke="#555" stroke-width="0.8"/>
<path d="M106.6 366.8h2.2M341.7 366.8h-2.2M106.6 352.15h2.2M341.7 352.15h-2.2M106.6 337.5h2.2M341.7 337.5h-2.2M106.6 322.85h2.2M341.7 322.85h-2.2M106.6 308.2h2.2M341.7 308.2h-2.2M106.6 293.55h2.2M341.7 293.55h-2.2M106.6 278.9h2.2M341.7 278.9h-2.2M106.6 264.25h2.2M341.7 264.25h-2.2M106.6 249.6h2.2M341.7 249.6h-2.2M106.6 234.95h2.2M341.7 234.95h-2.2M106.6 220.3h2.2M341.7 220.3h-2.2M126.2 367.3v-2.2M126.2 212.4v2.2M146.08 367.3v-2.2M146.08 212.4v2.2M165.96 367.3v-2.2M165.96 212.4v2.2M185.84 367.3v-2.2M185.84 212.4v2.2M205.72 367.3v-2.2M205.72 212.4v2.2M225.6 367.3v-2.2M225.6 212.4v2.2M245.48 367.3v-2.2M245.48 212.4v2.2M265.36 367.3v-2.2M265.36 212.4v2.2M285.24 367.3v-2.2M285.24 212.4v2.2M305.12 367.3v-2.2M305.12 212.4v2.2M325 367.3v-2.2M325 212.4v2.2" stroke="#555" stroke-width="0.7"/>
<g font-family="Liberation Sans" font-size="8.3" fill="#222">
<g text-anchor="end">
<text x="104.4" y="369.8">0</text>
<text x="104.4" y="355.15">10</text>
<text x="104.4" y="340.5">20</text>
<text x="104.4" y="325.85">30</text>
<text x="104.4" y="311.2">40</text>
<text x="104.4" y="296.55">50</text>
<text x="104.4" y="281.9">60</text>
<text x="104.4" y="267.25">70</text>
<text x="104.4" y="252.6">80</text>
<text x="104.4" y="237.95">90</text>
<text x="104.4" y="223.3">100</text>
</g><g text-anchor="middle">
<text x="126.2" y="378.3">0</text>
<text x="146.08" y="378.3">50</text>
<text x="165.96" y="378.3">100</text>
<text x="185.84" y="378.3">150</text>
<text x="205.72" y="378.3">200</text>
<text x="225.6" y="378.3">250</text>
<text x="245.48" y="378.3">300</text>
<text x="265.36" y="378.3">350</text>
<text x="285.24" y="378.3">400</text>
<text x="305.12" y="378.3">450</text>
<text x="325" y="378.3">500</text>
</g>
<text x="107.2" y="390.8" font-size="7.9">Inside</text>
<text x="341.4" y="386.8" text-anchor="end">[mm]</text>
<text x="341.4" y="395.6" text-anchor="end" font-size="7.9">Outside</text>
<text transform="translate(90.3 290.3) rotate(-90)" text-anchor="middle" font-size="8.5">Relative humidity (%)</text>
</g>
<path d="M352.6 216.4H366.3" stroke="#111" stroke-width="1"/>
<path d="M352.6 229.1H366.3" stroke="#3a4df0" stroke-width="1"/>
<rect x="352.6" y="238.6" width="13.7" height="7.9" fill="#a6b9f6"/>
<g font-family="Liberation Sans" font-size="8.5" fill="#222">
<text x="368.7" y="219.8">Relative humidity (%)</text>
<text x="368.7" y="232.6">saturation point</text>
<text x="368.7" y="245.3">Condensate</text>
</g>
</svg>
<!-- /CHART -->
<!-- FIG -->
<svg class="a" style="left:500px;top:240px" width="120" height="160" viewBox="500 240 120 160">
<defs><clipPath id="fc"><rect x="518.2" y="252" width="86.3" height="125"/></clipPath></defs>
<g clip-path="url(#fc)">
<rect x="518.2" y="253" width="86.3" height="3" fill="#8c8c8c"/>
<path d="M519 253.2v2.6M520.6 253.2v2.6M522.2 253.2v2.6M523.8 253.2v2.6M525.4 253.2v2.6M527 253.2v2.6M528.6 253.2v2.6M530.2 253.2v2.6M531.8 253.2v2.6M533.4 253.2v2.6M535 253.2v2.6M536.6 253.2v2.6M538.2 253.2v2.6M539.8 253.2v2.6M541.4 253.2v2.6M543 253.2v2.6M544.6 253.2v2.6M546.2 253.2v2.6M547.8 253.2v2.6M549.4 253.2v2.6M551 253.2v2.6M552.6 253.2v2.6M554.2 253.2v2.6M555.8 253.2v2.6M557.4 253.2v2.6M559 253.2v2.6M560.6 253.2v2.6M562.2 253.2v2.6M563.8 253.2v2.6M565.4 253.2v2.6M567 253.2v2.6M568.6 253.2v2.6M570.2 253.2v2.6M571.8 253.2v2.6M573.4 253.2v2.6M575 253.2v2.6M576.6 253.2v2.6M578.2 253.2v2.6M579.8 253.2v2.6M581.4 253.2v2.6M583 253.2v2.6M584.6 253.2v2.6M586.2 253.2v2.6M587.8 253.2v2.6M589.4 253.2v2.6M591 253.2v2.6M592.6 253.2v2.6M594.2 253.2v2.6M595.8 253.2v2.6M597.4 253.2v2.6M599 253.2v2.6M600.6 253.2v2.6M602.2 253.2v2.6M603.8 253.2v2.6" stroke="#a8a8a8" stroke-width="0.5"/>
<rect x="518.2" y="255.9" width="86.3" height="0.9" fill="#d89a68"/>
<rect x="518.2" y="256.8" width="86.3" height="15" fill="#a2a2a2"/>
<path d="M518.2 258.5 Q525.2 257.5 532.2 259 T546.2 259 T560.2 259 T574.2 259 T588.2 259 T602.2 259 T616.2 259 V268.5 Q609.2 269.5 602.2 268 T588.2 268 T574.2 268 T560.2 268 T546.2 268 T532.2 268 T518.2 268Z" fill="#d6d6d6"/>
<path d="M501 258L505.5 268.5h2.4L503.4 258ZM509.6 258L514.1 268.5h2.4L512 258ZM518.2 258L522.7 268.5h2.4L520.6 258ZM526.8 258L531.3 268.5h2.4L529.2 258ZM535.4 258L539.9 268.5h2.4L537.8 258ZM544 258L548.5 268.5h2.4L546.4 258ZM552.6 258L557.1 268.5h2.4L555 258ZM561.2 258L565.7 268.5h2.4L563.6 258ZM569.8 258L574.3 268.5h2.4L572.2 258ZM578.4 258L582.9 268.5h2.4L580.8 258ZM587 258L591.5 268.5h2.4L589.4 258ZM595.6 258L600.1 268.5h2.4L598 258ZM604.2 258L608.7 268.5h2.4L606.6 258ZM612.8 258L617.3 268.5h2.4L615.2 258Z" fill="#bdbdbd"/>
<rect x="518.2" y="263.5" width="5.8" height="5" fill="#8e8e8e"/>
<rect x="542" y="263.5" width="13" height="5" fill="#8e8e8e"/>
<rect x="570" y="263.5" width="8" height="5" fill="#8e8e8e"/>
<rect x="598.5" y="263.5" width="6" height="5" fill="#8e8e8e"/>
<circle cx="531.8" cy="264.8" r="1.1" fill="#fff" stroke="#444" stroke-width="0.6"/>
<circle cx="561.4" cy="264.8" r="1.1" fill="#fff" stroke="#444" stroke-width="0.6"/>
<circle cx="588.5" cy="264.8" r="1.1" fill="#fff" stroke="#444" stroke-width="0.6"/>
<rect x="518.2" y="268.6" width="86.3" height="3.8" fill="#9a9a9a"/>
<path d="M518.2 270 Q532.2 268.8 546.2 270.5 T574.2 270.5 T602.2 270.5 T630.2 270.5" stroke="#7a7a7a" stroke-width="0.6" fill="none"/>
<rect x="518.2" y="272.3" width="86.3" height="0.9" fill="#555"/>
<rect x="518.2" y="273.2" width="86.3" height="6" fill="#f2f2f2"/>
<path d="M519.8 274v4.4M522.95 274v4.4M526.1 274v4.4M529.25 274v4.4M532.4 274v4.4M535.55 274v4.4M538.7 274v4.4M541.85 274v4.4M545 274v4.4M548.15 274v4.4M551.3 274v4.4M554.45 274v4.4M557.6 274v4.4M560.75 274v4.4M563.9 274v4.4M567.05 274v4.4M570.2 274v4.4M573.35 274v4.4M576.5 274v4.4M579.65 274v4.4M582.8 274v4.4M585.95 274v4.4M589.1 274v4.4M592.25 274v4.4M595.4 274v4.4M598.55 274v4.4M601.7 274v4.4M604.85 274v4.4" stroke="#bdbdbd" stroke-width="1.1"/>
<rect x="518.2" y="279" width="86.3" height="0.9" fill="#6a6a6a"/>
<rect x="518.2" y="279.9" width="86.3" height="3" fill="#f0f0f0"/>
<path d="M519.8 281.4h1.3M522.95 281.4h1.3M526.1 281.4h1.3M529.25 281.4h1.3M532.4 281.4h1.3M535.55 281.4h1.3M538.7 281.4h1.3M541.85 281.4h1.3M545 281.4h1.3M548.15 281.4h1.3M551.3 281.4h1.3M554.45 281.4h1.3M557.6 281.4h1.3M560.75 281.4h1.3M563.9 281.4h1.3M567.05 281.4h1.3M570.2 281.4h1.3M573.35 281.4h1.3M576.5 281.4h1.3M579.65 281.4h1.3M582.8 281.4h1.3M585.95 281.4h1.3M589.1 281.4h1.3M592.25 281.4h1.3M595.4 281.4h1.3M598.55 281.4h1.3M601.7 281.4h1.3M604.85 281.4h1.3" stroke="#aaaaaa" stroke-width="1.1"/>
<rect x="518.2" y="282.9" width="86.3" height="0.5" fill="#888"/>
<rect x="518.2" y="283.4" width="86.3" height="9.2" fill="#f2f2f2"/>
<path d="M519.8 284v3.6M519.8 288.5v3.6M522.95 284v3.6M522.95 288.5v3.6M526.1 284v3.6M526.1 288.5v3.6M529.25 284v3.6M529.25 288.5v3.6M532.4 284v3.6M532.4 288.5v3.6M535.55 284v3.6M535.55 288.5v3.6M538.7 284v3.6M538.7 288.5v3.6M541.85 284v3.6M541.85 288.5v3.6M545 284v3.6M545 288.5v3.6M548.15 284v3.6M548.15 288.5v3.6M551.3 284v3.6M551.3 288.5v3.6M554.45 284v3.6M554.45 288.5v3.6M557.6 284v3.6M557.6 288.5v3.6M560.75 284v3.6M560.75 288.5v3.6M563.9 284v3.6M563.9 288.5v3.6M567.05 284v3.6M567.05 288.5v3.6M570.2 284v3.6M570.2 288.5v3.6M573.35 284v3.6M573.35 288.5v3.6M576.5 284v3.6M576.5 288.5v3.6M579.65 284v3.6M579.65 288.5v3.6M582.8 284v3.6M582.8 288.5v3.6M585.95 284v3.6M585.95 288.5v3.6M589.1 284v3.6M589.1 288.5v3.6M592.25 284v3.6M592.25 288.5v3.6M595.4 284v3.6M595.4 288.5v3.6M598.55 284v3.6M598.55 288.5v3.6M601.7 284v3.6M601.7 288.5v3.6M604.85 284v3.6M604.85 288.5v3.6" stroke="#c2c2c2" stroke-width="1.1"/>
<rect x="518.2" y="292.4" width="86.3" height="1" fill="#6a6a6a"/>
<rect x="518.2" y="293.4" width="86.3" height="9" fill="#efefef"/>
<path d="M518.2 293.6 Q519 300 520.4 301.5 A2.2 2.2 0 0 1 522.2 301.5 Q523.6 300 524.4 293.6M524.4 293.6 Q525.2 300 526.6 301.5 A2.2 2.2 0 0 1 528.4 301.5 Q529.8 300 530.6 293.6M530.6 293.6 Q531.4 300 532.8 301.5 A2.2 2.2 0 0 1 534.6 301.5 Q536 300 536.8 293.6M536.8 293.6 Q537.6 300 539 301.5 A2.2 2.2 0 0 1 540.8 301.5 Q542.2 300 543 293.6M543 293.6 Q543.8 300 545.2 301.5 A2.2 2.2 0 0 1 547 301.5 Q548.4 300 549.2 293.6M549.2 293.6 Q550 300 551.4 301.5 A2.2 2.2 0 0 1 553.2 301.5 Q554.6 300 555.4 293.6M555.4 293.6 Q556.2 300 557.6 301.5 A2.2 2.2 0 0 1 559.4 301.5 Q560.8 300 561.6 293.6M561.6 293.6 Q562.4 300 563.8 301.5 A2.2 2.2 0 0 1 565.6 301.5 Q567 300 567.8 293.6M567.8 293.6 Q568.6 300 570 301.5 A2.2 2.2 0 0 1 571.8 301.5 Q573.2 300 574 293.6M574 293.6 Q574.8 300 576.2 301.5 A2.2 2.2 0 0 1 578 301.5 Q579.4 300 580.2 293.6M580.2 293.6 Q581 300 582.4 301.5 A2.2 2.2 0 0 1 584.2 301.5 Q585.6 300 586.4 293.6M586.4 293.6 Q587.2 300 588.6 301.5 A2.2 2.2 0 0 1 590.4 301.5 Q591.8 300 592.6 293.6M592.6 293.6 Q593.4 300 594.8 301.5 A2.2 2.2 0 0 1 596.6 301.5 Q598 300 598.8 293.6M598.8 293.6 Q599.6 300 601 301.5 A2.2 2.2 0 0 1 602.8 301.5 Q604.2 300 605 293.6M605 293.6 Q605.8 300 607.2 301.5 A2.2 2.2 0 0 1 609 301.5 Q610.4 300 611.2 293.6" stroke="#a0a0a0" stroke-width="0.6" fill="none"/>
<rect x="518.2" y="302.4" width="86.3" height="1" fill="#6a6a6a"/>
<rect x="518.2" y="303.4" width="86.3" height="7.8" fill="#efefef"/>
<path d="M518.2 303.6 L521.3 310.6 L524.4 303.6M524.4 303.6 L527.5 310.6 L530.6 303.6M530.6 303.6 L533.7 310.6 L536.8 303.6M536.8 303.6 L539.9 310.6 L543 303.6M543 303.6 L546.1 310.6 L549.2 303.6M549.2 303.6 L552.3 310.6 L555.4 303.6M555.4 303.6 L558.5 310.6 L561.6 303.6M561.6 303.6 L564.7 310.6 L567.8 303.6M567.8 303.6 L570.9 310.6 L574 303.6M574 303.6 L577.1 310.6 L580.2 303.6M580.2 303.6 L583.3 310.6 L586.4 303.6M586.4 303.6 L589.5 310.6 L592.6 303.6M592.6 303.6 L595.7 310.6 L598.8 303.6M598.8 303.6 L601.9 310.6 L605 303.6M605 303.6 L608.1 310.6 L611.2 303.6" stroke="#a0a0a0" stroke-width="0.6" fill="none"/>
<rect x="518.2" y="310.8" width="86.3" height="0.9" fill="#777"/>
<rect x="518.2" y="311.6" width="86.3" height="18.7" fill="#faf07a"/>
<path d="M518.2 316.4 A3.1 2.6 0 0 1 524.4 316.4M524.4 316.4 A3.1 2.6 0 0 1 530.6 316.4M530.6 316.4 A3.1 2.6 0 0 1 536.8 316.4M536.8 316.4 A3.1 2.6 0 0 1 543 316.4M543 316.4 A3.1 2.6 0 0 1 549.2 316.4M549.2 316.4 A3.1 2.6 0 0 1 555.4 316.4M555.4 316.4 A3.1 2.6 0 0 1 561.6 316.4M561.6 316.4 A3.1 2.6 0 0 1 567.8 316.4M567.8 316.4 A3.1 2.6 0 0 1 574 316.4M574 316.4 A3.1 2.6 0 0 1 580.2 316.4M580.2 316.4 A3.1 2.6 0 0 1 586.4 316.4M586.4 316.4 A3.1 2.6 0 0 1 592.6 316.4M592.6 316.4 A3.1 2.6 0 0 1 598.8 316.4M598.8 316.4 A3.1 2.6 0 0 1 605 316.4M605 316.4 A3.1 2.6 0 0 1 611.2 316.4M611.2 316.4 A3.1 2.6 0 0 1 617.4 316.4M515.1 321 A3.1 2.6 0 0 1 521.3 321M521.3 321 A3.1 2.6 0 0 1 527.5 321M527.5 321 A3.1 2.6 0 0 1 533.7 321M533.7 321 A3.1 2.6 0 0 1 539.9 321M539.9 321 A3.1 2.6 0 0 1 546.1 321M546.1 321 A3.1 2.6 0 0 1 552.3 321M552.3 321 A3.1 2.6 0 0 1 558.5 321M558.5 321 A3.1 2.6 0 0 1 564.7 321M564.7 321 A3.1 2.6 0 0 1 570.9 321M570.9 321 A3.1 2.6 0 0 1 577.1 321M577.1 321 A3.1 2.6 0 0 1 583.3 321M583.3 321 A3.1 2.6 0 0 1 589.5 321M589.5 321 A3.1 2.6 0 0 1 595.7 321M595.7 321 A3.1 2.6 0 0 1 601.9 321M601.9 321 A3.1 2.6 0 0 1 608.1 321M608.1 321 A3.1 2.6 0 0 1 614.3 321M518.2 325.6 A3.1 2.6 0 0 1 524.4 325.6M524.4 325.6 A3.1 2.6 0 0 1 530.6 325.6M530.6 325.6 A3.1 2.6 0 0 1 536.8 325.6M536.8 325.6 A3.1 2.6 0 0 1 543 325.6M543 325.6 A3.1 2.6 0 0 1 549.2 325.6M549.2 325.6 A3.1 2.6 0 0 1 555.4 325.6M555.4 325.6 A3.1 2.6 0 0 1 561.6 325.6M561.6 325.6 A3.1 2.6 0 0 1 567.8 325.6M567.8 325.6 A3.1 2.6 0 0 1 574 325.6M574 325.6 A3.1 2.6 0 0 1 580.2 325.6M580.2 325.6 A3.1 2.6 0 0 1 586.4 325.6M586.4 325.6 A3.1 2.6 0 0 1 592.6 325.6M592.6 325.6 A3.1 2.6 0 0 1 598.8 325.6M598.8 325.6 A3.1 2.6 0 0 1 605 325.6M605 325.6 A3.1 2.6 0 0 1 611.2 325.6M611.2 325.6 A3.1 2.6 0 0 1 617.4 325.6M515.1 330.2 A3.1 2.6 0 0 1 521.3 330.2M521.3 330.2 A3.1 2.6 0 0 1 527.5 330.2M527.5 330.2 A3.1 2.6 0 0 1 533.7 330.2M533.7 330.2 A3.1 2.6 0 0 1 539.9 330.2M539.9 330.2 A3.1 2.6 0 0 1 546.1 330.2M546.1 330.2 A3.1 2.6 0 0 1 552.3 330.2M552.3 330.2 A3.1 2.6 0 0 1 558.5 330.2M558.5 330.2 A3.1 2.6 0 0 1 564.7 330.2M564.7 330.2 A3.1 2.6 0 0 1 570.9 330.2M570.9 330.2 A3.1 2.6 0 0 1 577.1 330.2M577.1 330.2 A3.1 2.6 0 0 1 583.3 330.2M583.3 330.2 A3.1 2.6 0 0 1 589.5 330.2M589.5 330.2 A3.1 2.6 0 0 1 595.7 330.2M595.7 330.2 A3.1 2.6 0 0 1 601.9 330.2M601.9 330.2 A3.1 2.6 0 0 1 608.1 330.2M608.1 330.2 A3.1 2.6 0 0 1 614.3 330.2" stroke="#aaa470" stroke-width="0.7" fill="none"/>
<rect x="518.2" y="319.6" width="86.3" height="1.4" fill="#c2ba78" opacity="0.8"/>
<rect x="518.2" y="330.3" width="86.3" height="19.3" fill="#e6e6e6"/>
<path d="M520 328.4 L520.9 330 A0.95 0.95 0 1 1 519.1 330Z" fill="#4a6ae0"/>
<path d="M529.6 328.4 L530.5 330 A0.95 0.95 0 1 1 528.7 330Z" fill="#4a6ae0"/>
<path d="M535.6 328.4 L536.5 330 A0.95 0.95 0 1 1 534.7 330Z" fill="#4a6ae0"/>
<path d="M545.6 328.4 L546.5 330 A0.95 0.95 0 1 1 544.7 330Z" fill="#4a6ae0"/>
<path d="M551.6 328.4 L552.5 330 A0.95 0.95 0 1 1 550.7 330Z" fill="#4a6ae0"/>
<path d="M585.7 328.4 L586.6 330 A0.95 0.95 0 1 1 584.8 330Z" fill="#4a6ae0"/>
<path d="M604 328.4 L604.9 330 A0.95 0.95 0 1 1 603.1 330Z" fill="#4a6ae0"/>
<rect x="518.2" y="349.6" width="86.3" height="20" fill="#c8b391"/>
<polygon points="533.69,345.17 531.16,349.26 525.48,349.14 520.69,347.42 518.78,343.13 522.91,340.1 527.86,338.66 533.1,340.66" fill="#dcdcdc" stroke="#5c5c5c" stroke-width="0.6"/>
<polygon points="541.33,339.36 538.75,341.76 535.06,340.76 532.81,338.54 533.81,335.52 537.69,335.18 540.97,336.42" fill="#dcdcdc" stroke="#5c5c5c" stroke-width="0.6"/>
<polygon points="535.6,345.4 534.66,348.16 532,348.19 529.89,346.79 529.62,343.87 532,342.61 534.48,342.89" fill="#e4e4e4" stroke="#5c5c5c" stroke-width="0.6"/>
<polygon points="549,336.8 547.94,338.87 544.92,338.9 542.53,337.84 542.22,335.65 544.92,334.71 547.73,334.92" fill="#e0e0e0" stroke="#5c5c5c" stroke-width="0.6"/>
<polygon points="548.54,341.29 546.71,343.51 543.21,343.11 540.74,341.56 541.02,339 544.42,338.3 547.61,338.94" fill="#ececec" stroke="#5c5c5c" stroke-width="0.6"/>
<polygon points="545,345.4 544.31,347.99 542.36,348.02 540.81,346.7 540.61,343.96 542.36,342.78 544.18,343.05" fill="#f0f0f0" stroke="#5c5c5c" stroke-width="0.6"/>
<polygon points="549.6,345.4 548.98,347.99 547.2,348.02 545.79,346.7 545.61,343.96 547.2,342.78 548.85,343.05" fill="#f0f0f0" stroke="#5c5c5c" stroke-width="0.6"/>
<polygon points="574.4,338.8 573.48,342.55 570.2,343.1 567.22,342.2 565.57,338.8 567.54,335.76 570.2,333.98 573.47,335.06" fill="#d8d8d8" stroke="#5c5c5c" stroke-width="0.6"/>
<polygon points="600.32,336.9 598.36,338.44 596.19,337.31 595.1,335.41 596.16,333.23 598.64,333.38 600.52,334.65" fill="#d8d8d8" stroke="#5c5c5c" stroke-width="0.6"/>
<polygon points="595.9,341.4 594.65,343.99 591.1,344.02 588.29,342.7 587.93,339.96 591.1,338.78 594.4,339.05" fill="#f0f0f0" stroke="#5c5c5c" stroke-width="0.6"/>
<polygon points="593.6,344.6 592.98,346.67 591.2,346.7 589.79,345.64 589.61,343.45 591.2,342.51 592.85,342.72" fill="#f4f4f4" stroke="#5c5c5c" stroke-width="0.6"/>
<polygon points="527.6,357.6 526.66,359.67 524,359.7 521.89,358.64 521.62,356.45 524,355.51 526.48,355.72" fill="#f0f0f0" stroke="#5c5c5c" stroke-width="0.6"/>
<polygon points="542.23,359.38 540.16,362.03 536.24,361.69 533.06,360.3 532.08,357.32 535.16,355.46 538.7,354.71 542.17,356.31" fill="#dcdcdc" stroke="#5c5c5c" stroke-width="0.6"/>
<polygon points="555.4,356.4 554.28,358.82 551.08,358.84 548.55,357.62 548.22,355.06 551.08,353.96 554.05,354.2" fill="#ececec" stroke="#5c5c5c" stroke-width="0.6"/>
<polygon points="561,355.2 559.69,357.27 555.96,357.3 553.01,356.24 552.63,354.05 555.96,353.11 559.43,353.32" fill="#e8e8e8" stroke="#5c5c5c" stroke-width="0.6"/>
<polygon points="577.3,356.4 576.47,359.52 573.5,359.98 570.81,359.23 569.31,356.4 571.1,353.87 573.5,352.38 576.46,353.28" fill="#e0e0e0" stroke="#5c5c5c" stroke-width="0.6"/>
<polygon points="567.8,358.2 566.55,360.44 563,360.47 560.19,359.33 559.83,356.96 563,355.93 566.3,356.16" fill="#e8e8e8" stroke="#5c5c5c" stroke-width="0.6"/>
<polygon points="569.31,367.46 566.28,371.8 561.34,370.75 557.49,367.99 556.67,362.71 560.88,359.85 565.5,358.97 569.69,362.13" fill="#e4e4e4" stroke="#5c5c5c" stroke-width="0.6"/>
<polygon points="593.46,359.05 591.14,361.6 588.21,360.29 586.13,357.97 586.18,354.32 589.07,352.91 592.01,352.89 594.26,355.52" fill="#e4e4e4" stroke="#5c5c5c" stroke-width="0.6"/>
<polygon points="588.2,363.4 587.26,365.99 584.6,366.02 582.49,364.7 582.22,361.96 584.6,360.78 587.08,361.05" fill="#e0e0e0" stroke="#5c5c5c" stroke-width="0.6"/>
</g>
<path d="M518.2 369.6 H604.5" stroke="#bcae90" stroke-width="0.3"/>
<g font-family="Liberation Sans" font-size="7.6" fill="#5b6279">
<text x="587.2" y="261.9">40%</text>
<text x="587.2" y="278.3">30%</text>
<text x="587.2" y="287">30%</text>
<text x="587.2" y="299.5">40%</text>
<text x="587.2" y="309">50%</text>
<text x="587.2" y="315.4">60%</text>
<text x="587.2" y="320.5">70%</text>
<text x="587.2" y="325.4">80%</text>
<text x="587.2" y="331.9">90%</text>
</g>
<circle cx="566.1" cy="329.5" r="5.7" fill="#1c3ec4"/>
<text x="566.2" y="332.5" font-family="Liberation Sans" font-size="8.4" font-weight="bold" fill="#fff" text-anchor="middle">1</text>
<rect x="577.2" y="248.2" width="1.5" height="131.6" fill="#1a1a1a"/>
<path d="M580 248.2 H583.4 L580 251.6Z" fill="#111"/>
<path d="M580.2 372 L584.6 375.6 L580.2 379.2Z" fill="#111"/>
<path d="M510.8 382.2H598.1M510.8 380.5V384M521.7 380.5V384M540.7 380.5V384M552.4 380.5V384M568.4 380.5V384M580.1 380.5V384M598.1 380.5V384" stroke="#777" stroke-width="0.7"/>
<g font-family="Liberation Sans" font-size="8.1" fill="#555" text-anchor="middle">
<text x="516.6" y="393.1">611</text>
<text x="531.2" y="393.1">98</text>
<text x="546" y="393.1">62</text>
<text x="559.7" y="393.1">84</text>
<text x="571.9" y="393.1">161</text>
<text x="589.2" y="393.1">99</text>
</g>
</svg>
<!-- /FIG -->
</body></html>
